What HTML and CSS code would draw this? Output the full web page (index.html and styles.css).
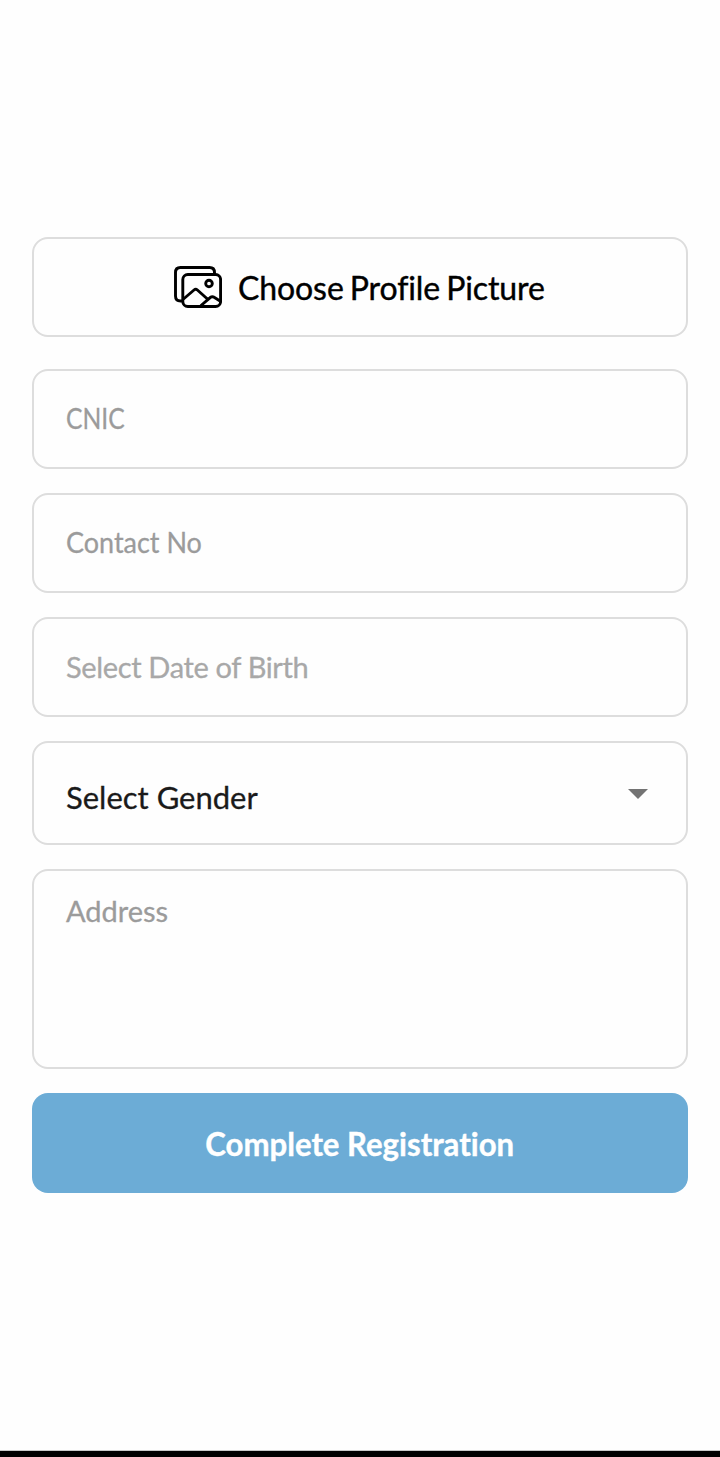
FILE: index.html
```html
<!DOCTYPE html>
<html lang="en">
<head>
<meta charset="utf-8">
<title>Complete Registration</title>
<link rel="stylesheet" href="styles.css">
</head>
<body>
<main class="screen">
  <form class="form">
    <div class="box picture">
      <svg class="gallery" width="48" height="42" viewBox="0 0 48 42" fill="none" stroke="#000" stroke-width="2.9" stroke-linecap="round" stroke-linejoin="round">
        <path d="M8 35H6.500Q1.500 35 1.500 30V6.500Q1.500 1.500 6.500 1.500H35.500Q40.500 1.500 40.500 6.500V8"/>
        <rect x="8.800" y="8.500" width="37.800" height="32" rx="5"/>
        <circle cx="35" cy="17.500" r="3.300"/>
        <path d="M9.500 33L20 24Q21.700 22.600 23.400 24L34 33.500M27 39.500L36.500 31.300Q38.300 30 40.100 31.300L46 35"/>
      </svg>
      <span class="text choose">Choose Profile Picture</span>
    </div>
    <div class="box field"><span class="text hint cnic">CNIC</span></div>
    <div class="box field"><span class="text hint contact">Contact No</span></div>
    <div class="box field"><span class="text hint birth">Select Date of Birth</span></div>
    <div class="box field select">
      <span class="text gender">Select Gender</span>
      <svg class="arrow" width="20" height="10" viewBox="0 0 20 10"><path d="M0 0H20L10 10Z" fill="#737373"/></svg>
    </div>
    <div class="box field area"><span class="text hint address">Address</span></div>
    <div class="submit"><span class="text complete">Complete Registration</span></div>
  </form>
  <div class="navbar"></div>
</main>
</body>
</html>
```
FILE: styles.css
```css
* { box-sizing: border-box; }
body { margin: 0; background: #fefefe; font-family: Lato, "Open Sans", sans-serif; font-variant-ligatures: none; }
.screen { height: 1457px; display: flex; flex-direction: column; justify-content: space-between; overflow: hidden; }
.form { padding: 237px 32px 0; display: flex; flex-direction: column; gap: 24px; }
.box { height: 100px; border: 2px solid #ddd; border-radius: 16px; background: #fefefe; display: flex; align-items: center; }
.picture { margin-bottom: 8px; padding-left: 140px; gap: 16px; }
.gallery { flex: none; margin-bottom: 1px; }
.text { white-space: nowrap; line-height: 40px; transform-origin: left center; }
.field { padding: 0 38px 0 32px; }
.hint { color: #9b9b9b; font-size: 29px; -webkit-text-stroke: 0.3px; }
.choose { color: #000; font-size: 32px; letter-spacing: -0.1px; word-spacing: -2px; padding-top: 2px; -webkit-text-stroke: 0.4px; }
.cnic { transform: scaleX(0.85); padding-bottom: 2px; }
.contact { transform: scaleX(0.93); padding-bottom: 2px; }
.birth { color: #a8a8a8; letter-spacing: -0.35px; }
.select { height: 104px; justify-content: space-between; }
.gender { color: #1a1a1a; font-size: 31px; padding-top: 8px; -webkit-text-stroke: 0.3px; }
.arrow { margin-top: 2px; }
.area { height: 200px; align-items: flex-start; padding-top: 20px; }
.submit { height: 100px; border-radius: 16px; background: #6cacd6; display: flex; align-items: center; justify-content: center; }
.complete { color: #fff; font-size: 33px; font-weight: 700; transform: scaleX(0.943); transform-origin: center; -webkit-text-stroke: 0.4px; }
.navbar { height: 7px; background: #000; border-top: 1px solid #c8c8c8; }
```
